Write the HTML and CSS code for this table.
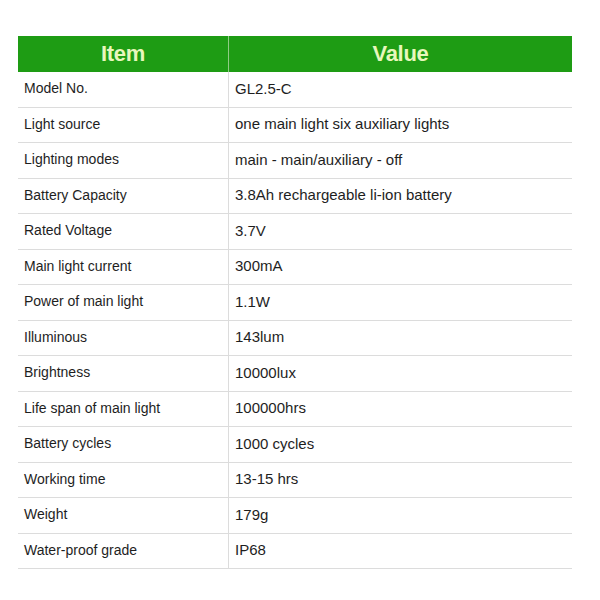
FILE: index.html
```html
<!DOCTYPE html>
<html>
<head>
<meta charset="utf-8">
<link rel="stylesheet" href="styles.css">
</head>
<body>
<table class="spec">
  <thead>
    <tr><th class="c1">Item</th><th class="c2">Value</th></tr>
  </thead>
  <tbody>
    <tr><td>Model No.</td><td>GL2.5-C</td></tr>
    <tr><td>Light source</td><td>one main light six auxiliary lights</td></tr>
    <tr><td>Lighting modes</td><td>main - main/auxiliary - off</td></tr>
    <tr><td>Battery Capacity</td><td>3.8Ah rechargeable li-ion battery</td></tr>
    <tr><td>Rated Voltage</td><td>3.7V</td></tr>
    <tr><td>Main light current</td><td>300mA</td></tr>
    <tr><td>Power of main light</td><td>1.1W</td></tr>
    <tr><td>Illuminous</td><td>143lum</td></tr>
    <tr><td>Brightness</td><td>10000lux</td></tr>
    <tr><td>Life span of main light</td><td>100000hrs</td></tr>
    <tr><td>Battery cycles</td><td>1000 cycles</td></tr>
    <tr><td>Working time</td><td>13-15 hrs</td></tr>
    <tr><td>Weight</td><td>179g</td></tr>
    <tr><td>Water-proof grade</td><td>IP68</td></tr>
  </tbody>
</table>
</body>
</html>
```

FILE: styles.css
```css
html, body {
  margin: 0;
  padding: 0;
  background: #ffffff;
}
body {
  padding: 36px 0 0 18px;
  font-family: "Liberation Sans", Arial, sans-serif;
}
.spec {
  border-collapse: collapse;
  width: 554px;
  table-layout: fixed;
}
.spec th {
  background: #1e9c14;
  color: #e8f7bc;
  font-size: 22px;
  font-weight: bold;
  letter-spacing: -0.3px;
  height: 36px;
  padding: 0;
  text-align: center;
  vertical-align: middle;
}
.spec th.c1 {
  width: 210px;
  border-right: 1px solid #8fcc84;
}
.spec td {
  height: 32.5px;
  padding: 0 0 2px 6px;
  font-size: 15px;
  color: #1e1e1e;
  border-bottom: 1px solid #dcdcdc;
  vertical-align: middle;
  white-space: nowrap;
}
.spec td:first-child {
  font-size: 14px;
  border-right: 1px solid #dcdcdc;
}
```
